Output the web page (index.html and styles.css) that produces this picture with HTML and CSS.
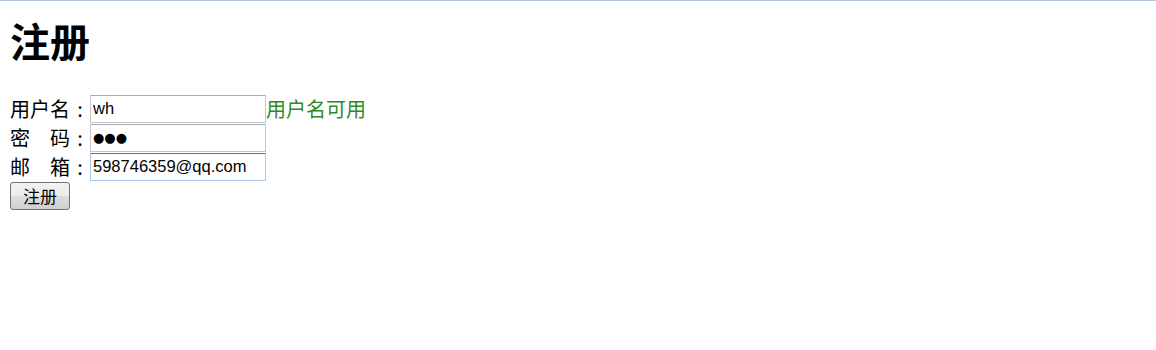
FILE: index.html
```html
<!DOCTYPE html>
<html lang="zh-CN">
<head>
<meta charset="utf-8">
<title>注册</title>
<link rel="stylesheet" href="styles.css">
</head>
<body>
<div class="topline"></div>
<main class="page">
  <h1 class="title">注册</h1>
  <form class="form">
    <div class="row">
      <span class="label">用户名<span class="colon">:</span></span>
      <input class="field" type="text" value="wh">
      <span class="ok">用户名可用</span>
    </div>
    <div class="row">
      <span class="label">密　码<span class="colon">:</span></span>
      <input class="field field-dots" type="text" value="●●●">
    </div>
    <div class="row">
      <span class="label">邮　箱<span class="colon">:</span></span>
      <input class="field field-focus" type="text" value="598746359@qq.com">
    </div>
    <div class="row-btn">
      <button class="btn" type="button">注册</button>
    </div>
  </form>
</main>
</body>
</html>
```

FILE: styles.css
```css
html, body {
  margin: 0;
  padding: 0;
  background: #ffffff;
}
body {
  font-family: "Noto Sans CJK SC", "Liberation Sans", sans-serif;
  color: #000000;
}
.topline {
  height: 1px;
  background: #b4c4d9;
}
.page {
  padding: 0 10px;
}
.title {
  margin: 15px 0 0 0;
  font-size: 40px;
  line-height: 48px;
  font-weight: 700;
  font-family: "Noto Sans CJK SC", sans-serif;
}
.form {
  margin-top: 30px;
}
.row {
  display: flex;
  align-items: center;
  height: 29px;
}
.label {
  display: flex;
  font-size: 20px;
  line-height: 24px;
  width: 80px;
  white-space: nowrap;
}
.colon {
  display: inline-block;
  width: 20px;
  text-align: center;
  font-family: "Noto Sans CJK SC", sans-serif;
}
.field {
  box-sizing: border-box;
  width: 176px;
  height: 28px;
  margin: 0;
  padding: 1px 2px;
  border: 1px solid #c5c7cc;
  border-top-color: #abadb3;
  font-family: "Liberation Sans", "DejaVu Sans", sans-serif;
  font-size: 16.5px;
  color: #000000;
  outline: none;
  background: #ffffff;
}
.field-dots {
  font-family: "DejaVu Sans", sans-serif;
  font-size: 13px;
  letter-spacing: 0;
}
.field-focus {
  border-color: #a9cbe8;
  border-top-color: #3d7bad;
}
.ok {
  font-size: 20px;
  line-height: 24px;
  color: #2f8a1f;
}
.row-btn {
  display: flex;
  height: 29px;
  align-items: center;
}
.btn {
  box-sizing: border-box;
  width: 60px;
  height: 28px;
  margin: 0;
  padding: 0;
  border: 1px solid #707070;
  border-radius: 3px;
  background: linear-gradient(#f2f2f2 0%, #ebebeb 50%, #dddddd 51%, #cfcfcf 100%);
  font-family: "Noto Sans CJK SC", sans-serif;
  font-size: 17px;
  line-height: 20px;
  color: #000000;
}
```
